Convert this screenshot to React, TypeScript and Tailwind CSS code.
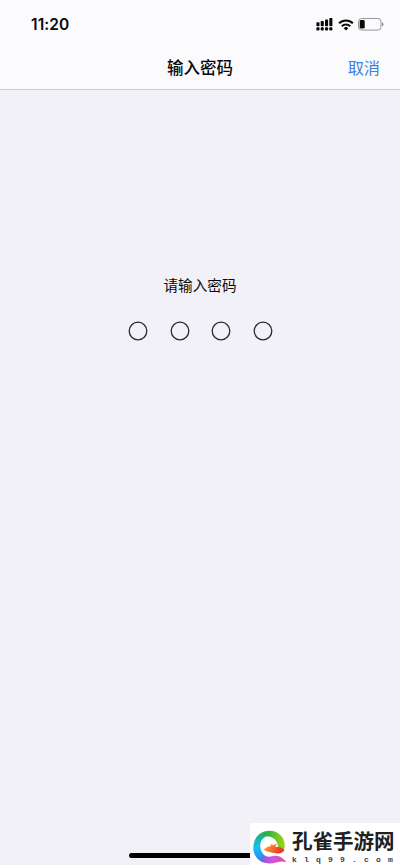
import React from 'react';

const CODE_LENGTH = 4;

const SignalIcon: React.FC = () => (
  <svg width="17" height="13" viewBox="0 0 17 13" fill="#080809" aria-hidden="true">
    <rect x="0.4" y="4.3" width="3.1" height="3.9" rx="0.8" />
    <rect x="4.7" y="3" width="3.1" height="5.2" rx="0.8" />
    <rect x="9" y="1.6" width="3.1" height="6.6" rx="0.8" />
    <rect x="13.3" y="0" width="3.1" height="8.2" rx="0.8" />
    <rect x="0.4" y="9.3" width="3.1" height="3.2" rx="1" />
    <rect x="4.7" y="9.3" width="3.1" height="3.2" rx="1" />
    <rect x="9" y="9.3" width="3.1" height="3.2" rx="1" />
    <rect x="13.3" y="9.3" width="3.1" height="3.2" rx="1" />
  </svg>
);

const WifiIcon: React.FC = () => (
  <svg width="16" height="12" viewBox="0 0 16 12" fill="none" stroke="#080809" aria-hidden="true">
    <path d="M1.1 4.3a9.8 9.8 0 0 1 13.8 0" strokeWidth="2.1" />
    <path d="M3.8 7.2a6 6 0 0 1 8.4 0" strokeWidth="2" />
    <path d="M5.7 9.2a3.3 3.3 0 0 1 4.6 0L8 11.5z" fill="#080809" stroke="none" />
  </svg>
);

const BatteryIcon: React.FC = () => (
  <svg width="26" height="13" viewBox="0 0 26 13" aria-hidden="true">
    <rect x="0.5" y="0.5" width="22.5" height="11.6" rx="3.2" fill="none" stroke="#98989b" />
    <rect x="1.7" y="2" width="5" height="8.6" rx="1.4" fill="#080809" />
    <path d="M24 4.2c1 .4 1.500 1.100 1.500 2.100S25 8 24 8.400z" fill="#8e8e91" />
  </svg>
);

const PeacockLogo: React.FC = () => (
  <svg width="36" height="34" viewBox="0 0 36 34" className="shrink-0" aria-hidden="true">
    <defs>
      <linearGradient id="crest" gradientUnits="userSpaceOnUse" x1="1" y1="12" x2="30" y2="16">
        <stop offset="0" stopColor="#10b5b0" />
        <stop offset="0.4" stopColor="#2cb044" />
        <stop offset="1" stopColor="#9ad416" />
      </linearGradient>
      <linearGradient id="body" gradientUnits="userSpaceOnUse" x1="4" y1="9" x2="9" y2="31">
        <stop offset="0" stopColor="#14b6b0" />
        <stop offset="0.35" stopColor="#18c0f2" />
        <stop offset="0.75" stopColor="#1f9df0" />
        <stop offset="1" stopColor="#5470e6" />
      </linearGradient>
      <linearGradient id="tail" gradientUnits="userSpaceOnUse" x1="9" y1="27" x2="33" y2="31">
        <stop offset="0" stopColor="#8a5ae4" />
        <stop offset="0.45" stopColor="#cf55dc" />
        <stop offset="1" stopColor="#ee3fa8" />
      </linearGradient>
      <linearGradient id="bird" gradientUnits="userSpaceOnUse" x1="14" y1="15" x2="27" y2="23">
        <stop offset="0" stopColor="#ff9a1d" />
        <stop offset="0.6" stopColor="#f4582a" />
        <stop offset="1" stopColor="#e9342a" />
      </linearGradient>
    </defs>
    <path d="M.8 13.500C2.500 5.500 9 .8 16.500.8 25 .8 31.800 7 31.800 15.500c0 2.200-.5 4-1.600 5.500-1-1.600-2.700-2.700-5-3.300C24.800 11.500 21 6.500 15 6.500 9.500 6.500 4.500 9 .8 13.500z" fill="url(#crest)" />
    <path d="M1 13C4.500 8.800 8 7 13 6.600 9 8.800 7 12 7.200 16c.2 4.500 2.300 8.200 6.500 11L10 32.500C4 30 .3 24.500.3 18c0-2 .2-3.500.7-5z" fill="url(#body)" />
    <path d="M9 31.800c0-2.700 1-4.700 3-6 2.500 1.300 5 1.200 8 .3 5.500-1.500 9 .8 13.500 6-3.500-.9-6-1-9.500.2-5.500 1.700-11 1.600-15-.5z" fill="url(#tail)" />
    <path d="M10.200 19.400c1.300.2 2-1.100 3.300-1.900 1.500-1 3-1 4.300-1.500l1-2.800 1 2.200 4-1.900-1.700 3.200c4-.3 7.500.5 9.400 3.600-2.300 2.900-5.500 3.700-8.700 2.900-4-1-7.300-1-12.600-3.800z" fill="url(#bird)" />
  </svg>
);

const StatusBar: React.FC = () => (
  <div className="flex h-[45px] items-start justify-between pl-[31px] pr-[16px]">
    <span className="pt-[16px] font-['Inter'] text-[15.500px] font-semibold leading-[18px] tracking-[0.1px]">11:20</span>
    <div className="flex items-center gap-[4.500px] pt-[18px]">
      <SignalIcon />
      <WifiIcon />
      <BatteryIcon />
    </div>
  </div>
);

const NavBar: React.FC = () => (
  <div className="grid h-[44px] grid-cols-[1fr_auto_1fr] items-center pt-[2px]">
    <span />
    <h1 className="text-[16.500px] font-medium leading-6">输入密码</h1>
    <button type="button" className="justify-self-end pr-[20px] text-[16.200px] leading-6 text-[#3b80e2]">
      取消
    </button>
  </div>
);

const CodeDot: React.FC = () => (
  <svg width="20" height="20" viewBox="0 0 20 20" fill="none" stroke="#29292d" strokeWidth="1.3" aria-hidden="true">
    <circle cx="10" cy="10" r="8.800" />
  </svg>
);

const Watermark: React.FC = () => (
  <div className="absolute bottom-0 right-0 flex h-[42px] w-[150px] bg-white pl-[3px] pt-[7px]">
    <PeacockLogo />
    <div className="-mt-[1px] ml-[3px] flex flex-col whitespace-nowrap text-[#202020]">
      <span className="text-[20.500px] font-bold leading-[26px]">孔雀手游网</span>
      <span className="mt-px font-['Liberation_Mono'] text-[8px] font-bold leading-[7px] tracking-[7.200px] text-[#404040]">klq99.com</span>
    </div>
  </div>
);

const App: React.FC = () => {
  return (
    <div className="relative flex h-[865px] w-[400px] flex-col overflow-hidden bg-[#f2f1f8] font-['Liberation_Sans','Noto_Sans_CJK_SC',sans-serif] text-[#080809]">
      <header className="h-[90px] shrink-0 border-b border-[#cacad0] bg-[#fbfbfd]">
        <StatusBar />
        <NavBar />
      </header>

      <main className="flex flex-1 flex-col items-center pt-[185px]">
        <p className="text-[14.600px] leading-[22px]">请输入密码</p>
        <div className="mt-[24px] flex gap-[21.500px] pl-[0.500px]">
          {Array.from({ length: CODE_LENGTH }, (_, i) => (
            <CodeDot key={i} />
          ))}
        </div>
      </main>

      <div className="mb-[7px] ml-[129px] h-[5px] w-[142px] shrink-0 rounded-full bg-black" />
      <Watermark />
    </div>
  );
};

export default App;
